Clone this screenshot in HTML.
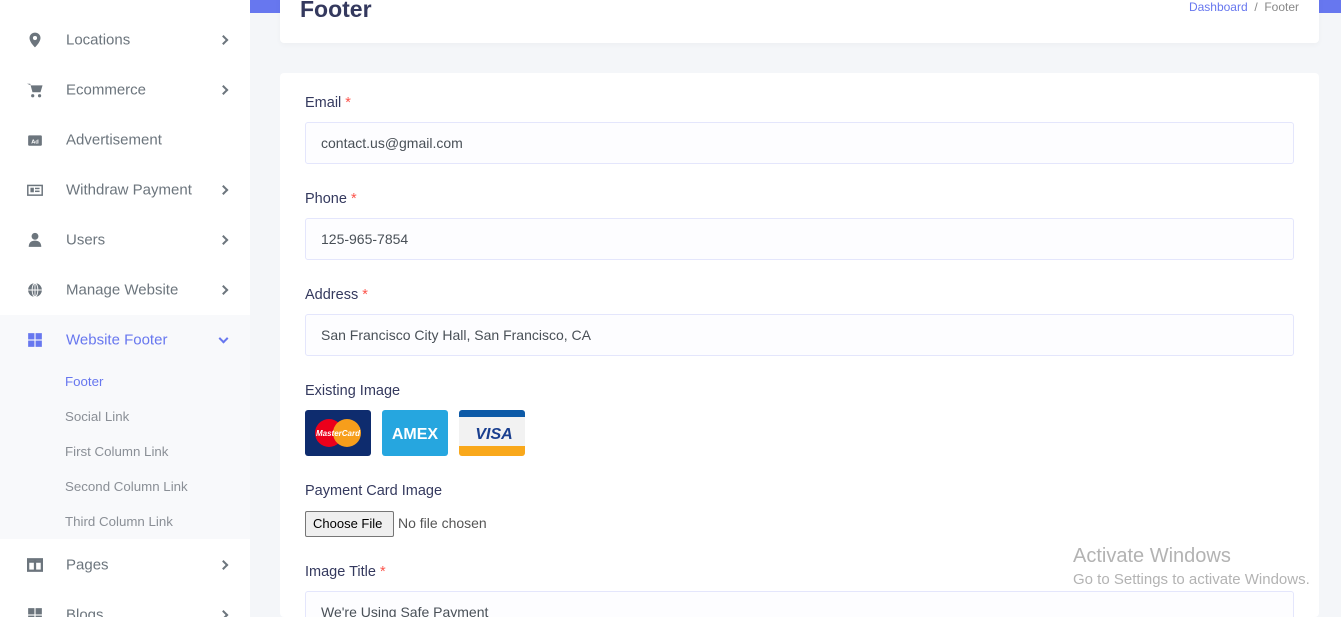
<!DOCTYPE html>
<html style="overflow:hidden;width:1341px;height:617px"><head><meta charset="utf-8"><style>
*{box-sizing:border-box;margin:0;padding:0}
body{width:1341px;height:617px;overflow:hidden;background:#f4f6f9;font-family:"Liberation Sans",sans-serif;position:relative}
.side{position:absolute;left:0;top:0;width:250px;height:617px;background:#fff;overflow:hidden}
.item{position:absolute;left:0;width:250px;height:50px;font-size:15px;color:#6c757d}
.item .ic{position:absolute;left:27px;top:50%;transform:translateY(-50%);width:16px;height:16px}
.item .t{position:absolute;left:66px;top:50%;transform:translateY(-50%)}
.item .ch{position:absolute;left:220px;top:50%;width:7px;height:7px;border-right:2px solid #6c757d;border-top:2px solid #6c757d;transform:translateY(-50%) rotate(45deg)}
.sub{position:absolute;left:0;top:315px;width:250px;height:224px;background:#f8f9fb}
.sl{position:absolute;left:65px;font-size:13.3px;color:#8a8f96}
.top{position:absolute;left:250px;top:0;width:1091px;height:13px;background:#6777ef}
.hcard{position:absolute;left:280px;top:-10px;width:1039px;height:53px;background:#fff;border-radius:4px;box-shadow:0 2px 6px rgba(0,0,0,.03)}
.hcard h1{position:absolute;left:20px;top:6px;font-size:23px;color:#34395e;font-weight:bold}
.bc{position:absolute;right:20px;top:10px;font-size:12px;color:#6777ef}
.bc span{color:#888}
.card{position:absolute;left:280px;top:73px;width:1039px;height:544px;background:#fff;border-radius:4px;overflow:hidden}
.lb{position:absolute;left:25px;font-size:14.5px;color:#34395e}
.lb b{color:#fc544b;font-weight:normal}
.inp{position:absolute;left:25px;width:989px;height:42px;background:#fdfdff;border:1px solid #e4e6fc;border-radius:3px;font-size:14px;color:#495057;padding:12px 15px}
.cc{position:absolute;top:337px;width:66px;height:46px;border-radius:3px}
.wm{position:absolute;left:1073px;color:#b3b3b3}
</style></head><body>
<div class="side">
<div class="item" style="top:15px"><svg class="ic" viewBox="0 0 14 14"><path d="M7 0.5a4.8 4.8 0 0 0-4.8 4.8C2.2 9 7 13.5 7 13.5s4.8-4.5 4.8-8.2A4.8 4.8 0 0 0 7 .5zm0 6.6a1.8 1.8 0 1 1 0-3.6 1.8 1.8 0 0 1 0 3.6z" fill="#6c757d"/></svg><span class="t">Locations</span><i class="ch"></i></div>
<div class="item" style="top:65px"><svg class="ic" viewBox="0 0 14 14"><path d="M0 1.5h2.8l2 7.5h7l1.8-6H3.6z" fill="#6c757d"/><circle cx="5" cy="12" r="1.4" fill="#6c757d"/><circle cx="11" cy="12" r="1.4" fill="#6c757d"/></svg><span class="t">Ecommerce</span><i class="ch"></i></div>
<div class="item" style="top:115px"><svg class="ic" viewBox="0 0 14 14"><rect x="1" y="3" width="12" height="9" rx="1" fill="#6c757d"/><text x="7" y="10" font-size="5" fill="#fff" text-anchor="middle" font-family="Liberation Sans" font-weight="bold">Ad</text></svg><span class="t">Advertisement</span></div>
<div class="item" style="top:165px"><svg class="ic" viewBox="0 0 14 14"><rect x="0.7" y="3" width="12.6" height="8.5" fill="none" stroke="#6c757d" stroke-width="1.3"/><rect x="3" y="5" width="3" height="4" fill="#6c757d"/><rect x="7" y="5" width="4" height="1.3" fill="#6c757d"/><rect x="7" y="7.5" width="4" height="1.3" fill="#6c757d"/></svg><span class="t">Withdraw Payment</span><i class="ch"></i></div>
<div class="item" style="top:215px"><svg class="ic" viewBox="0 0 14 14"><circle cx="7" cy="3.8" r="3" fill="#6c757d"/><path d="M1.5 13c0-4 2.5-5.5 5.5-5.5s5.5 1.5 5.5 5.5z" fill="#6c757d"/></svg><span class="t">Users</span><i class="ch"></i></div>
<div class="item" style="top:265px"><svg class="ic" viewBox="0 0 14 14"><circle cx="7" cy="7" r="6" fill="#6c757d"/><path d="M1 7h12M7 1v12" stroke="#fff" stroke-width=".8"/><ellipse cx="7" cy="7" rx="2.5" ry="6" fill="none" stroke="#fff" stroke-width=".8"/></svg><span class="t">Manage Website</span><i class="ch"></i></div>
<div class="sub"></div>
<div class="item" style="top:315px;color:#6777ef"><svg class="ic" viewBox="0 0 14 14" fill="#6777ef"><rect x="1" y="1" width="5.5" height="5.5"/><rect x="7.5" y="1" width="5.5" height="5.5"/><rect x="1" y="7.5" width="5.5" height="5.5"/><rect x="7.5" y="7.5" width="5.5" height="5.5"/></svg><span class="t">Website Footer</span><i class="ch" style="border-color:#6777ef;transform:translateY(-70%) rotate(135deg)"></i></div>
<div class="sl" style="top:374px;color:#6777ef">Footer</div>
<div class="sl" style="top:409px">Social Link</div>
<div class="sl" style="top:444px">First Column Link</div>
<div class="sl" style="top:479px">Second Column Link</div>
<div class="sl" style="top:514px">Third Column Link</div>
<div class="item" style="top:540px"><svg class="ic" viewBox="0 0 14 14"><rect x="1" y="2" width="12" height="10" fill="none" stroke="#6c757d" stroke-width="2"/><path d="M7 2v10M1 4h12" stroke="#6c757d" stroke-width="2"/></svg><span class="t">Pages</span><i class="ch"></i></div>
<div class="item" style="top:590px"><svg class="ic" viewBox="0 0 14 14" fill="#6c757d"><rect x="1" y="1" width="5.5" height="5.5"/><rect x="7.5" y="1" width="5.5" height="5.5"/><rect x="1" y="7.5" width="5.5" height="5.5"/><rect x="7.5" y="7.5" width="5.5" height="5.5"/></svg><span class="t">Blogs</span><i class="ch"></i></div>
</div>
<div class="top"></div>
<div class="hcard"><h1>Footer</h1><div class="bc">Dashboard &nbsp;<span>/ &nbsp;Footer</span></div></div>
<div class="card">
<div class="lb" style="top:22px">Email <b>*</b></div>
<div class="inp" style="top:49px">contact.us@gmail.com</div>
<div class="lb" style="top:118px">Phone <b>*</b></div>
<div class="inp" style="top:145px">125-965-7854</div>
<div class="lb" style="top:214px">Address <b>*</b></div>
<div class="inp" style="top:241px">San Francisco City Hall, San Francisco, CA</div>
<div class="lb" style="top:310px">Existing Image</div>
<div class="cc" style="left:25px;background:#0e2c6e"><svg width="66" height="46"><circle cx="24" cy="23" r="14" fill="#eb001b"/><circle cx="42" cy="23" r="14" fill="#f79e1b"/><text x="33" y="26" font-size="8" fill="#fff" text-anchor="middle" font-style="italic" font-weight="bold" font-family="Liberation Sans">MasterCard</text></svg></div>
<div class="cc" style="left:102px;background:#26a6df"><svg width="66" height="46"><text x="33" y="29" font-size="16" fill="#fff" text-anchor="middle" font-weight="bold" font-family="Liberation Sans">AMEX</text></svg></div>
<div class="cc" style="left:179px;background:#f2f2f2;overflow:hidden"><div style="height:7px;background:#0d5aa7"></div><svg width="66" height="28"><text x="35" y="22" font-size="16" fill="#1a3f8f" text-anchor="middle" font-weight="bold" font-style="italic" font-family="Liberation Sans">VISA</text></svg><div style="position:absolute;bottom:0;left:0;width:66px;height:10px;background:#f9a81b"></div></div>
<div class="lb" style="top:410px">Payment Card Image</div>
<div style="position:absolute;left:25px;top:438px;width:89px;height:26px;border:1px solid #767676;background:#efefef;border-radius:2px;font-size:13px;padding:4px 7px;color:#000">Choose File</div>
<div style="position:absolute;left:118px;top:442px;font-size:14px;color:#555">No file chosen</div>
<div class="lb" style="top:491px">Image Title <b>*</b></div>
<div class="inp" style="top:518px">We're Using Safe Payment</div>
</div>
<div class="wm" style="top:545px;font-size:20px">Activate Windows</div>
<div class="wm" style="top:571px;font-size:15px">Go to Settings to activate Windows.</div>
</body></html>
